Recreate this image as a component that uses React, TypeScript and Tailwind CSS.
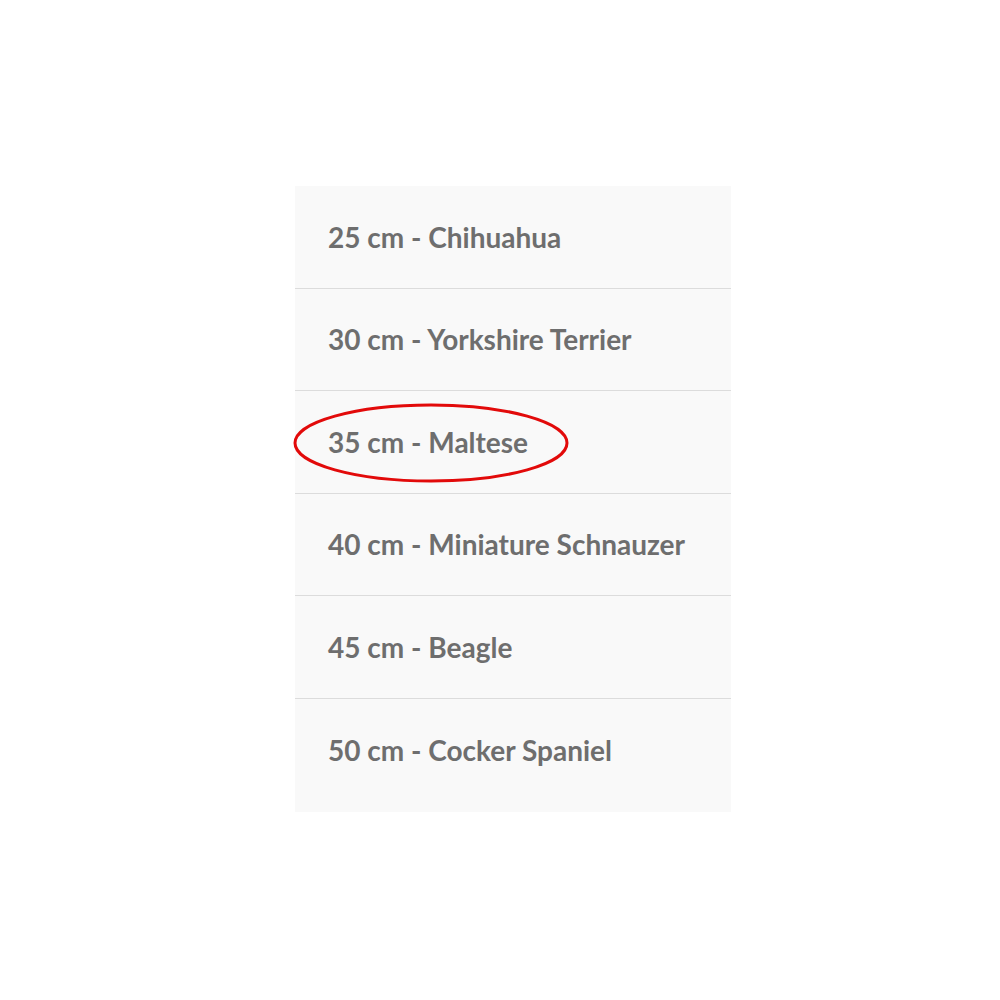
import React from 'react'

const sizes = [
  '25 cm - Chihuahua',
  '30 cm - Yorkshire Terrier',
  '35 cm - Maltese',
  '40 cm - Miniature Schnauzer',
  '45 cm - Beagle',
  '50 cm - Cocker Spaniel',
]

export default function App() {
  return (
    <div className="w-[1000px] h-[1000px] bg-white pt-[186px] pl-[295px]" style={{ fontFamily: 'Lato, "Open Sans", sans-serif' }}>
      <div className="w-[436px] bg-[#f9f9f9] pb-[11px]">
        {sizes.map((label, i) => (
          <div
            key={label}
            className={
              'relative flex items-center pl-[33px] h-[102.5px] text-[28px] font-bold text-[#6e6e6e] ' +
              (i < sizes.length - 1 ? 'border-b border-[#dcdcdc]' : '')
            }
          >
            <span>{label}</span>
            {i === 2 && (
              <svg className="absolute left-[-3px] top-[11px]" width="278" height="82" viewBox="0 0 278 82">
                <ellipse cx="139" cy="41" rx="136" ry="38" fill="none" stroke="#e20a0a" strokeWidth="3" />
              </svg>
            )}
          </div>
        ))}
      </div>
    </div>
  )
}
